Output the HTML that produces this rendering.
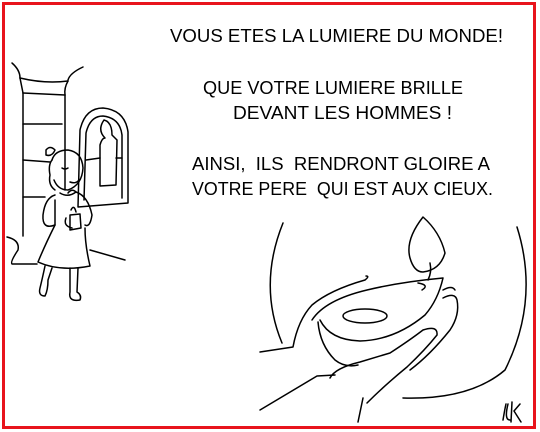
<!DOCTYPE html>
<html><head><meta charset="utf-8"><style>
html,body{margin:0;padding:0;background:#fff;width:540px;height:432px;overflow:hidden}
svg{display:block}
</style></head><body>
<svg width="540" height="432" viewBox="0 0 540 432" xmlns="http://www.w3.org/2000/svg">
<rect x="0" y="0" width="540" height="432" fill="#fff"/>
<rect x="3.5" y="3.5" width="531" height="424" fill="none" stroke="#e8141c" stroke-width="3"/>
<g font-family="Liberation Sans, sans-serif" font-size="18.5" fill="#000">
<text x="170" y="42" textLength="333" lengthAdjust="spacingAndGlyphs">VOUS ETES LA LUMIERE DU MONDE!</text>
<text x="203" y="94" textLength="260" lengthAdjust="spacingAndGlyphs">QUE VOTRE LUMIERE BRILLE</text>
<text x="233" y="119" textLength="219" lengthAdjust="spacingAndGlyphs">DEVANT LES HOMMES !</text>
<text x="192" y="170" textLength="298" lengthAdjust="spacingAndGlyphs" xml:space="preserve">AINSI,  ILS  RENDRONT GLOIRE A</text>
<text x="192" y="195" textLength="301" lengthAdjust="spacingAndGlyphs" xml:space="preserve">VOTRE PERE  QUI EST AUX CIEUX.</text>
</g>
<g fill="none" stroke="#000" stroke-width="1.5" stroke-linecap="round" stroke-linejoin="round">
<path d="M283,223 Q258,285 282,343"/>
<path d="M517,227 Q540,300 505,370 Q470,400 403,398"/>
<path d="M423,217 Q405,240 410,258 Q414,272 423,272 Q440,270 445,253 Q440,232 423,217 Z"/>
<path d="M430,263 Q432,272 428,280"/>
<path d="M312,320 Q325,300 367,290 Q400,282 443,278 Q438,300 425,315 Q395,340 360,341 Q330,340 320,320"/>
<path d="M418,283 Q430,285 422,290"/>
<ellipse cx="365" cy="316" rx="22" ry="7"/>
<path d="M318,322 Q320,345 335,360 Q345,368 358,365"/>
<path d="M260,352 L293,347 Q298,320 312,305 Q330,290 365,280 Q370,276 366,276"/>
<path d="M260,410 L317,376 L335,375"/>
<path d="M330,378 Q335,368 360,362 L390,353 Q410,340 423,330 Q438,325 437,335 Q425,350 407,367 Q385,385 367,403"/>
<path d="M363,398 L358,422"/>
<path d="M443,298 Q455,292 457,300 Q460,315 450,330 Q430,355 410,370"/>
<path d="M443,290 Q452,285 455,290"/>
<path d="M503,420 Q505,408 506,404 M508,404 Q504,420 510,420 M512,402 L511,422 M514,411 L520,404 M514,411 L521,422"/>
<path d="M12,63 Q20,70 20,78 M83,67 Q70,73 68,80"/>
<path d="M20,78 Q45,84 68,81"/>
<path d="M20,78 Q22,88 23,93 M68,81 Q64,88 65,95"/>
<path d="M23,93 L65,95"/>
<path d="M23,93 L23,236 M65,95 L65,190"/>
<path d="M23,124 L62,124 M23,160 L50,162 M23,197 L45,197"/>
<path d="M7,237 Q20,240 18,250 Q10,262 12,264 L37,264"/>
<path d="M78,207 L80,130 Q85,108 103,108 Q125,110 128,132 L128,203 L78,207"/>
<path d="M84,200 L86,133 Q90,116 103,116 Q120,118 122,135 L122,198"/>
<path d="M104,120 Q112,122 112,135 L117,140 L116,185 L100,186 L100,145 Q102,138 105,138 Q97,130 104,120"/>
<path d="M86,160 L100,158 M116,158 L122,158"/>
<path d="M90,250 L125,260"/>
<path d="M52,160 Q55,150 68,150 Q82,152 83,168 Q82,185 68,190 Q58,190 54,180"/>
<path d="M52,160 Q48,165 50,175 Q48,185 55,190"/>
<path d="M46,150 Q50,145 55,150 Q52,157 46,155 Z"/>
<path d="M62,168 Q65,170 68,168 M70,182 Q75,184 78,181"/>
<path d="M60,193 Q68,198 76,192 Q72,188 68,193"/>
<path d="M55,195 Q45,198 43,215 Q42,230 55,225"/>
<path d="M76,192 Q88,196 92,215 Q90,228 85,225"/>
<path d="M55,200 L55,225 Q45,245 38,262 Q60,272 90,266 Q85,245 85,228"/>
<path d="M71,210 Q74,204 76,212 M70,215 L80,214 L81,228 L70,230 Z M66,218 Q63,226 72,228"/>
<path d="M45,266 Q42,280 40,288 Q38,296 45,296 Q48,290 48,280 L52,268"/>
<path d="M70,268 L70,292 Q68,302 80,300 Q82,295 77,292 L78,268"/>
</g>
</svg>
</body></html>
